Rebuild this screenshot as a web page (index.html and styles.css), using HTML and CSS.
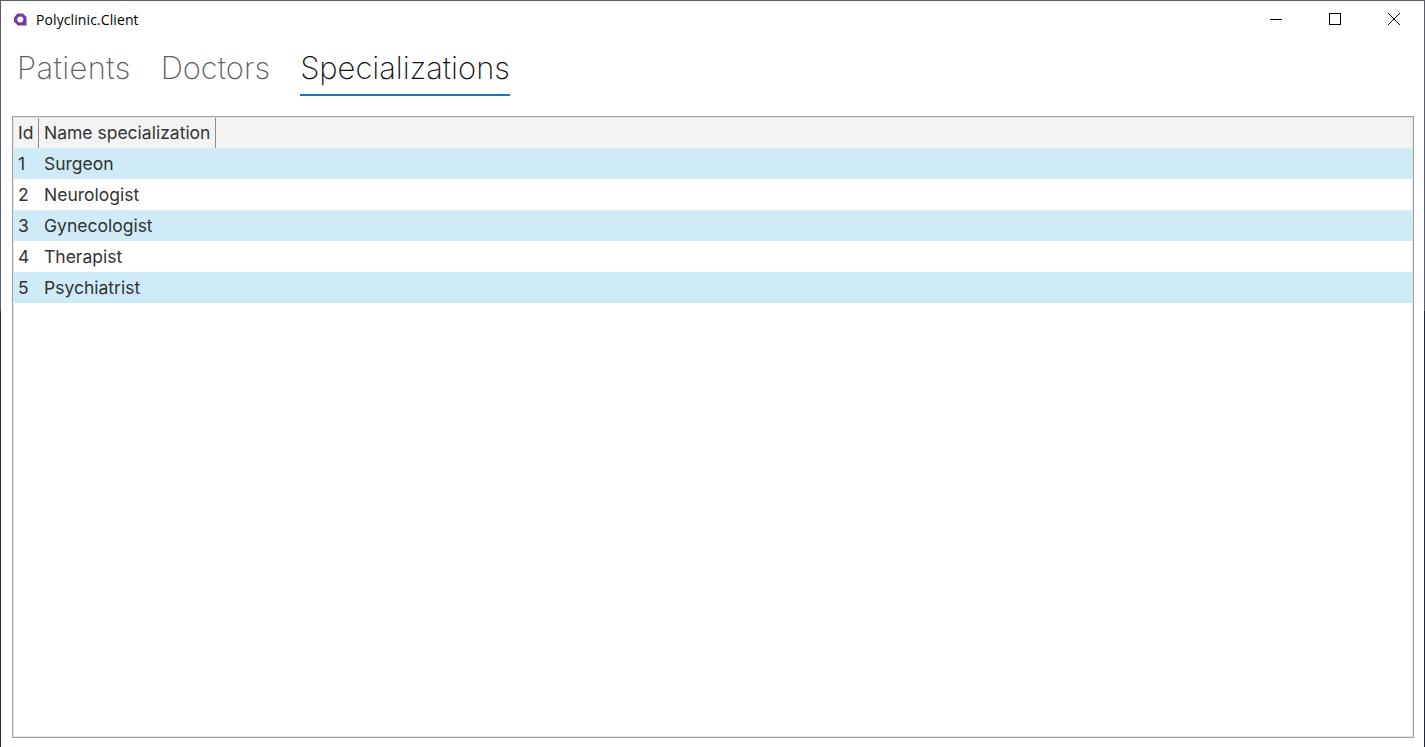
FILE: index.html
```html
<!DOCTYPE html>
<html>
<head>
  <title>Polyclinic.Client</title>
  <link rel="stylesheet" href="styles.css">
</head>
<body>
  <div class="window">
    <div class="titlebar">
      <svg class="app-icon" width="16" height="16" viewBox="0 0 16 16">
        <path d="M5.500 1.500h5.500l3.500 3.500v8.500h-8.500l-4-4v-4z" fill="#7b3a9e"/>
        <circle cx="8.300" cy="7.500" r="3" fill="#fff"/>
      </svg>
      <span class="app-title">Polyclinic.Client</span>
      <div class="controls">
        <div class="control">
          <svg width="12" height="12" viewBox="0 0 12 12"><path d="M0 6.500h12" stroke="#000" fill="none"/></svg>
        </div>
        <div class="control">
          <svg width="12" height="12" viewBox="0 0 12 12"><rect x="0.500" y="0.500" width="11" height="11" stroke="#000" fill="none"/></svg>
        </div>
        <div class="control">
          <svg width="12" height="12" viewBox="0 0 12 12"><path d="M0 0l12 12M12 0l-12 12" stroke="#000" fill="none"/></svg>
        </div>
      </div>
    </div>

    <div class="tabs">
      <div class="tab tab-patients">Patients</div>
      <div class="tab">Doctors</div>
      <div class="tab active">Specializations</div>
    </div>

    <div class="grid">
      <div class="grid-head">
        <div class="head-cell col-id">Id</div>
        <div class="head-cell col-name">Name specialization</div>
      </div>
      <div class="row alt"><div class="cell col-id">1</div><div class="cell">Surgeon</div></div>
      <div class="row"><div class="cell col-id">2</div><div class="cell">Neurologist</div></div>
      <div class="row alt"><div class="cell col-id">3</div><div class="cell">Gynecologist</div></div>
      <div class="row"><div class="cell col-id">4</div><div class="cell">Therapist</div></div>
      <div class="row alt"><div class="cell col-id">5</div><div class="cell">Psychiatrist</div></div>
    </div>
  </div>
</body>
</html>
```

FILE: styles.css
```css
html, body {
  margin: 0;
  height: 100%;
  overflow: hidden;
}

body {
  background: linear-gradient(#575c70 0, #575c70 311px, #1c2647 311px);
  padding: 1px 1px 0 1px;
  box-sizing: border-box;
  font-family: Inter, "Liberation Sans", sans-serif;
  color: #333;
}

.window {
  background: #fff;
  height: 100%;
  display: flex;
  flex-direction: column;
}

.titlebar {
  height: 37px;
  display: flex;
  align-items: center;
  padding-left: 11px;
  flex: none;
}

.app-icon {
  margin-right: 8px;
}

.app-title {
  font-family: "Open Sans", sans-serif;
  font-size: 14px;
  letter-spacing: 0.1px;
  color: #000;
}

.controls {
  margin-left: auto;
  display: flex;
  align-self: flex-start;
  padding-right: 1px;
}

.control {
  width: 59px;
  height: 36px;
  display: flex;
  align-items: center;
  justify-content: center;
}

.tabs {
  display: flex;
  gap: 30px;
  padding-left: 16px;
  flex: none;
}

.tab {
  font-size: 30.900px;
  font-weight: 200;
  line-height: 60px;
  height: 58px;
  box-sizing: border-box;
  color: #5f5f5f;
}

.tab-patients {
  letter-spacing: 0.4px;
}

.tab.active {
  color: #111;
  position: relative;
}

.tab.active::after {
  content: "";
  position: absolute;
  left: 0;
  right: 0;
  top: 56px;
  height: 2px;
  background: #0f78c8;
}

.grid {
  margin: 20px 10px 9px 11px;
  border: 1px solid #a0a0a0;
  outline: 1px solid #e4e4e4;
  outline-offset: -2px;
  flex: 1;
}

.grid-head {
  display: flex;
  height: 31px;
  background: #f3f3f3;
}

.head-cell {
  font-size: 17.500px;
  line-height: 32px;
  padding-left: 5px;
  box-sizing: border-box;
  border-right: 1px solid #8c8c8c;
}

.col-id {
  width: 26px;
  flex: none;
  box-sizing: border-box;
}

.col-name {
  width: 177px;
}

.row {
  display: flex;
  height: 31px;
}

.row.alt {
  background: #ceebf7;
}

.cell {
  font-size: 17.500px;
  line-height: 32px;
  padding-left: 5px;
}
```
